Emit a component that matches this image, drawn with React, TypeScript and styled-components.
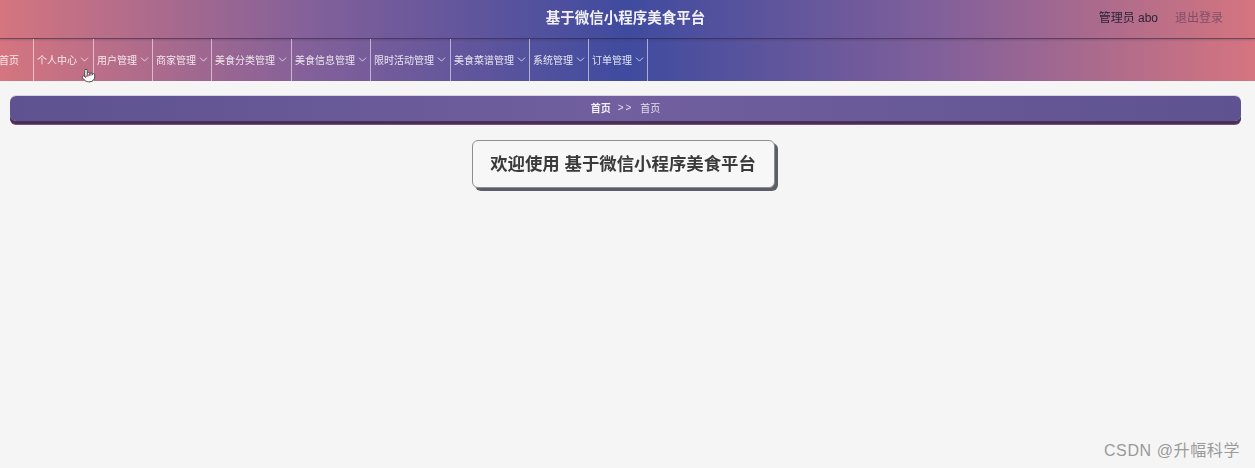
import styled, { createGlobalStyle } from "styled-components";
import { ChevronDown, Pointer } from "lucide-react";

const GlobalStyle = createGlobalStyle`
    html, body {
        margin: 0;
        height: 100%;
        background: #f5f5f5;
        font-family: "Liberation Sans", "Noto Sans CJK SC", sans-serif;
    }
    #root {
        height: 100%;
    }
`

const Page = styled.div`
    position: relative;
    height: 468px;
    overflow: hidden;
    background: #f5f5f5;
`

/* the source capture is a soft video frame */
const Bands = styled.div`
    background: linear-gradient(90deg, #d5757f 0%, #82609a 25%, #3f4b9f 50%, #82609a 75%, #d5757f 100%);
    filter: blur(0.4px);
`

const Header = styled.header`
    display: grid;
    grid-template-columns: 1fr auto 1fr;
    align-items: center;
    box-sizing: border-box;
    height: 39px;
    padding-bottom: 5px;
    border-bottom: 1px solid rgba(50, 35, 65, 0.6);
    box-shadow: 0 1px 2px rgba(50, 35, 65, 0.25);
`

const Title = styled.h1`
    grid-column: 2;
    margin: 0 4px 0 0;
    font-size: 14.5px;
    font-weight: bold;
    color: #f2f0f6;
`

const UserArea = styled.div`
    display: flex;
    justify-content: flex-end;
    gap: 17px;
    padding-right: 32px;
    font-size: 12px;
`

const UserName = styled.span`
    color: #2a2438;
`

const Logout = styled.a`
    color: rgba(70, 50, 80, 0.55);
`

const Nav = styled.nav`
    display: flex;
    height: 42px;
    margin-left: -4px;
`

const NavItem = styled.div<{ $width: number }>`
    display: flex;
    align-items: center;
    gap: 1px;
    box-sizing: border-box;
    width: ${(p) => p.$width}px;
    padding: 0 0 1px 3px;
    border-right: 1px solid rgba(255, 255, 255, 0.55);
    font-size: 10px;
    color: rgba(255, 255, 255, 0.85);
    white-space: nowrap;

    & svg {
        flex: none;
    }
`

const HandCursor = styled(Pointer)`
    position: absolute;
    left: 81px;
    top: 68px;
    fill: #fff;
    stroke: #4a4a4a;
`

const Content = styled.main`
    display: flex;
    flex-direction: column;
    align-items: center;
    padding: 15px 14px 0 10px;
    filter: blur(0.4px);
`

const Breadcrumb = styled.div`
    display: flex;
    align-items: center;
    justify-content: center;
    gap: 7px;
    box-sizing: border-box;
    width: 100%;
    height: 25px;
    padding-bottom: 3px;
    border-radius: 6px;
    background: linear-gradient(90deg, #5e5290 0%, #715f9f 50%, #5e5290 100%);
    box-shadow: 0 3px 0 #4a2f55, 0 4px 0 #7a4f78, 0 -1px 0 #d8d5e0;
    font-size: 10px;
    color: rgba(255, 255, 255, 0.8);
`

const CrumbHome = styled.span`
    font-weight: bold;
    color: #f2eff6;
`

const CrumbArrow = styled.span`
    letter-spacing: 2px;
`

const WelcomeCard = styled.div`
    box-sizing: border-box;
    width: 303px;
    height: 48px;
    margin: 19px 5px 0 0;
    border: 1px solid #8e8e92;
    border-radius: 6px;
    background: #f7f7f7;
    box-shadow: 3px 3px 0 #5b5f68;
    font-size: 17.4px;
    font-weight: bold;
    line-height: 46px;
    text-align: center;
    color: #3a3a3a;
    white-space: nowrap;
`

const Watermark = styled.div`
    position: absolute;
    right: 15px;
    bottom: 7px;
    font-size: 16px;
    letter-spacing: 0.6px;
    color: #9a9a9a;
`

const menu = [
    { label: "首页", width: 38, arrow: false },
    { label: "个人中心", width: 60, arrow: true },
    { label: "用户管理", width: 59, arrow: true },
    { label: "商家管理", width: 59, arrow: true },
    { label: "美食分类管理", width: 80, arrow: true },
    { label: "美食信息管理", width: 79, arrow: true },
    { label: "限时活动管理", width: 80, arrow: true },
    { label: "美食菜谱管理", width: 79, arrow: true },
    { label: "系统管理", width: 59, arrow: true },
    { label: "订单管理", width: 59, arrow: true },
];

const App = () => {
    return (
        <Page>
            <GlobalStyle />
            <Bands>
                <Header>
                    <Title>基于微信小程序美食平台</Title>
                    <UserArea>
                        <UserName>管理员 abo</UserName>
                        <Logout>退出登录</Logout>
                    </UserArea>
                </Header>
                <Nav>
                    {menu.map((item) => (
                        <NavItem key={item.label} $width={item.width}>
                            {item.label}
                            {item.arrow && <ChevronDown size={13} strokeWidth={1.5} />}
                        </NavItem>
                    ))}
                </Nav>
            </Bands>
            <Content>
                <Breadcrumb>
                    <CrumbHome>首页</CrumbHome>
                    <CrumbArrow>&gt;&gt;</CrumbArrow>
                    <span>首页</span>
                </Breadcrumb>
                <WelcomeCard>欢迎使用 基于微信小程序美食平台</WelcomeCard>
            </Content>
            <HandCursor size={15} strokeWidth={1.6} />
            <Watermark>CSDN @升幅科学</Watermark>
        </Page>
    );
};

export default App;
